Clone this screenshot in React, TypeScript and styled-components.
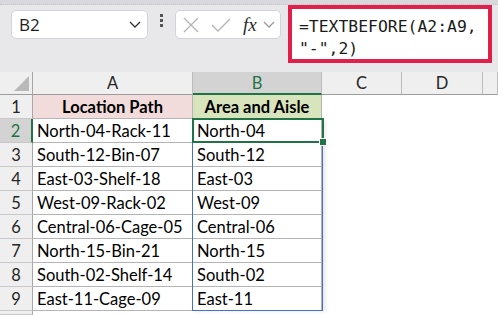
import React from "react";
import styled, { createGlobalStyle } from "styled-components";

const GlobalStyle = createGlobalStyle`
  html, body {
    margin: 0;
    padding: 0;
    background: #ffffff;
    overflow: hidden;
  }
  body {
    font-family: Lato, "Noto Sans", sans-serif;
  }
`;

const COLS = "33px 160px 129px 80px 81px 1fr";

const Page = styled.div`
  width: 498px;
  height: 315px;
  overflow: hidden;
  background: #ffffff;
`;

const TopStrip = styled.div`
  height: 4px;
  background: #d9d9dd;
  border-bottom: 1px dotted #c4c4c8;
`;

const FormulaBar = styled.div`
  display: flex;
  align-items: flex-start;
  height: 67px;
  padding-left: 11px;
  background: #e8e8eb;
  box-sizing: border-box;
`;

const NameBox = styled.div`
  display: flex;
  align-items: center;
  justify-content: space-between;
  box-sizing: border-box;
  width: 137px;
  height: 29px;
  margin-top: 5px;
  padding: 0 6px 0 7px;
  background: #ffffff;
  border: 1px solid #d4d4d8;
  border-radius: 5px;
  font-family: "Open Sans", "Noto Sans", sans-serif;
  font-size: 17px;
  color: #1e1e1e;
`;

const Grip = styled.div`
  display: flex;
  flex-direction: column;
  gap: 2px;
  margin: 9px 12px 0 12px;
`;

const GripDot = styled.span`
  display: block;
  width: 3px;
  height: 3px;
  background: #555555;
`;

const FxBox = styled.div`
  display: flex;
  align-items: center;
  box-sizing: border-box;
  width: 106px;
  height: 29px;
  margin-top: 5px;
  padding-left: 7px;
  gap: 12px;
  background: #ffffff;
  border: 1px solid #d4d4d8;
  border-radius: 5px;
`;

const FxLabel = styled.span`
  font-family: "Liberation Serif", serif;
  font-style: italic;
  font-size: 19px;
  color: #2b2b2b;
  margin-right: -6px;
`;

const FormulaBox = styled.div`
  box-sizing: border-box;
  width: 204px;
  height: 58px;
  margin-left: 7px;
  padding: 7px 0 0 7px;
  background: #ffffff;
  border: 4px solid #e0204a;
  font-family: "DejaVu Sans Mono", "Liberation Mono", monospace;
  font-size: 16.4px;
  line-height: 22px;
  color: #1b1b1b;
  white-space: pre;
`;

const Sheet = styled.div`
  display: grid;
  grid-template-columns: ${COLS};
  grid-template-rows: 23px repeat(9, 24px) 1fr;
  height: 243px;
  font-family: Lato, "Noto Sans", sans-serif;
  font-size: 16.5px;
`;

const Row = styled.div<{ $row: number }>`
  display: grid;
  grid-template-columns: ${COLS};
  grid-column: 1 / -1;
  grid-row: ${(p) => p.$row};
`;

const Corner = styled.div`
  display: flex;
  align-items: flex-end;
  justify-content: flex-end;
  padding: 0 3px 3px 0;
  background: #efefef;
  border-right: 1px solid #a8a8a8;
  border-bottom: 1px solid #9c9c9c;
`;

const ColHead = styled.div<{ $active?: boolean }>`
  display: flex;
  align-items: center;
  justify-content: center;
  background: ${(p) => (p.$active ? "#d3d3d3" : "#efefef")};
  color: ${(p) => (p.$active ? "#217346" : "#262626")};
  border-right: 1px solid #bcbcbc;
  border-bottom: ${(p) => (p.$active ? "2px solid #217346" : "1px solid #9c9c9c")};
`;

const RowHead = styled.div<{ $active?: boolean }>`
  display: flex;
  align-items: center;
  justify-content: center;
  background: ${(p) => (p.$active ? "#d3d3d3" : "#efefef")};
  color: ${(p) => (p.$active ? "#217346" : "#262626")};
  border-bottom: 1px solid #c8c8c8;
  border-right: ${(p) => (p.$active ? "2px solid #217346" : "1px solid #a8a8a8")};
`;

const Cell = styled.div<{ $bg?: string; $head?: boolean; $lined?: boolean }>`
  display: flex;
  align-items: center;
  justify-content: ${(p) => (p.$head ? "center" : "flex-start")};
  padding-left: ${(p) => (p.$head ? "0" : "4px")};
  overflow: hidden;
  white-space: nowrap;
  background: ${(p) => p.$bg || "#ffffff"};
  color: #000000;
  font-weight: ${(p) => (p.$head ? 700 : 400)};
  border-right: ${(p) => (p.$lined ? "1px solid #b4b4b4" : "none")};
  border-bottom: ${(p) => (p.$lined ? "1px solid #b4b4b4" : "none")};
`;

const SpillFrame = styled.div`
  grid-column: 3;
  grid-row: 3 / 11;
  margin: 0 -1px 0 -1px;
  border: 1px solid #4472c4;
  box-shadow: 3px 1px 3px rgba(0, 0, 0, 0.08);
  z-index: 1;
  pointer-events: none;
`;

const Selection = styled.div`
  position: relative;
  grid-column: 3;
  grid-row: 3;
  margin: -1px -2px 0 -1px;
  border: 2px solid #217346;
  z-index: 2;
  pointer-events: none;
`;

const FillHandle = styled.span`
  position: absolute;
  right: -5px;
  bottom: -5px;
  width: 6px;
  height: 6px;
  background: #217346;
  border: 1px solid #ffffff;
`;

const rows: [string, string][] = [
  ["North-04-Rack-11", "North-04"],
  ["South-12-Bin-07", "South-12"],
  ["East-03-Shelf-18", "East-03"],
  ["West-09-Rack-02", "West-09"],
  ["Central-06-Cage-05", "Central-06"],
  ["North-15-Bin-21", "North-15"],
  ["South-02-Shelf-14", "South-02"],
  ["East-11-Cage-09", "East-11"],
];

const Chevron = ({ color }: { color: string }) => (
  <svg width="12" height="7" viewBox="0 0 12 7">
    <path d="M1 1 L6 6 L11 1" fill="none" stroke={color} strokeWidth="1.3" />
  </svg>
);

export default function App() {
  return (
    <Page>
      <GlobalStyle />
      <TopStrip />
      <FormulaBar>
        <NameBox>
          <span>B2</span>
          <Chevron color="#333333" />
        </NameBox>
        <Grip>
          <GripDot />
          <GripDot />
          <GripDot />
        </Grip>
        <FxBox>
          <svg width="16" height="16" viewBox="0 0 16 16">
            <path d="M1 1 L15 15 M15 1 L1 15" stroke="#b4b4b4" strokeWidth="1.3" fill="none" />
          </svg>
          <svg width="20" height="16" viewBox="0 0 20 16">
            <path d="M1 8 L7 14 L19 2" stroke="#b4b4b4" strokeWidth="1.3" fill="none" />
          </svg>
          <FxLabel>fx</FxLabel>
          <Chevron color="#9a9a9a" />
        </FxBox>
        <FormulaBox>{'=TEXTBEFORE(A2:A9,\n"-",2)'}</FormulaBox>
      </FormulaBar>
      <Sheet>
        <Row $row={1}>
          <Corner>
            <svg width="15" height="15" viewBox="0 0 15 15">
              <polygon points="15,0 15,15 0,15" fill="#b9b9b9" />
            </svg>
          </Corner>
          <ColHead>A</ColHead>
          <ColHead $active>B</ColHead>
          <ColHead>C</ColHead>
          <ColHead>D</ColHead>
          <ColHead />
        </Row>

        <Row $row={2}>
          <RowHead>1</RowHead>
          <Cell $head $lined $bg="#f2dcdb">Location Path</Cell>
          <Cell $head $lined $bg="#d8e4bc">Area and Aisle</Cell>
          <Cell />
          <Cell />
          <Cell />
        </Row>

        {rows.map(([path, area], i) => (
          <Row $row={i + 3} key={path}>
            <RowHead $active={i === 0}>{i + 2}</RowHead>
            <Cell $lined>{path}</Cell>
            <Cell $lined>{area}</Cell>
            <Cell />
            <Cell />
            <Cell />
          </Row>
        ))}

        <Row $row={11}>
          <RowHead />
          <Cell />
          <Cell />
          <Cell />
          <Cell />
          <Cell />
        </Row>

        <SpillFrame />
        <Selection>
          <FillHandle />
        </Selection>
      </Sheet>
    </Page>
  );
}
